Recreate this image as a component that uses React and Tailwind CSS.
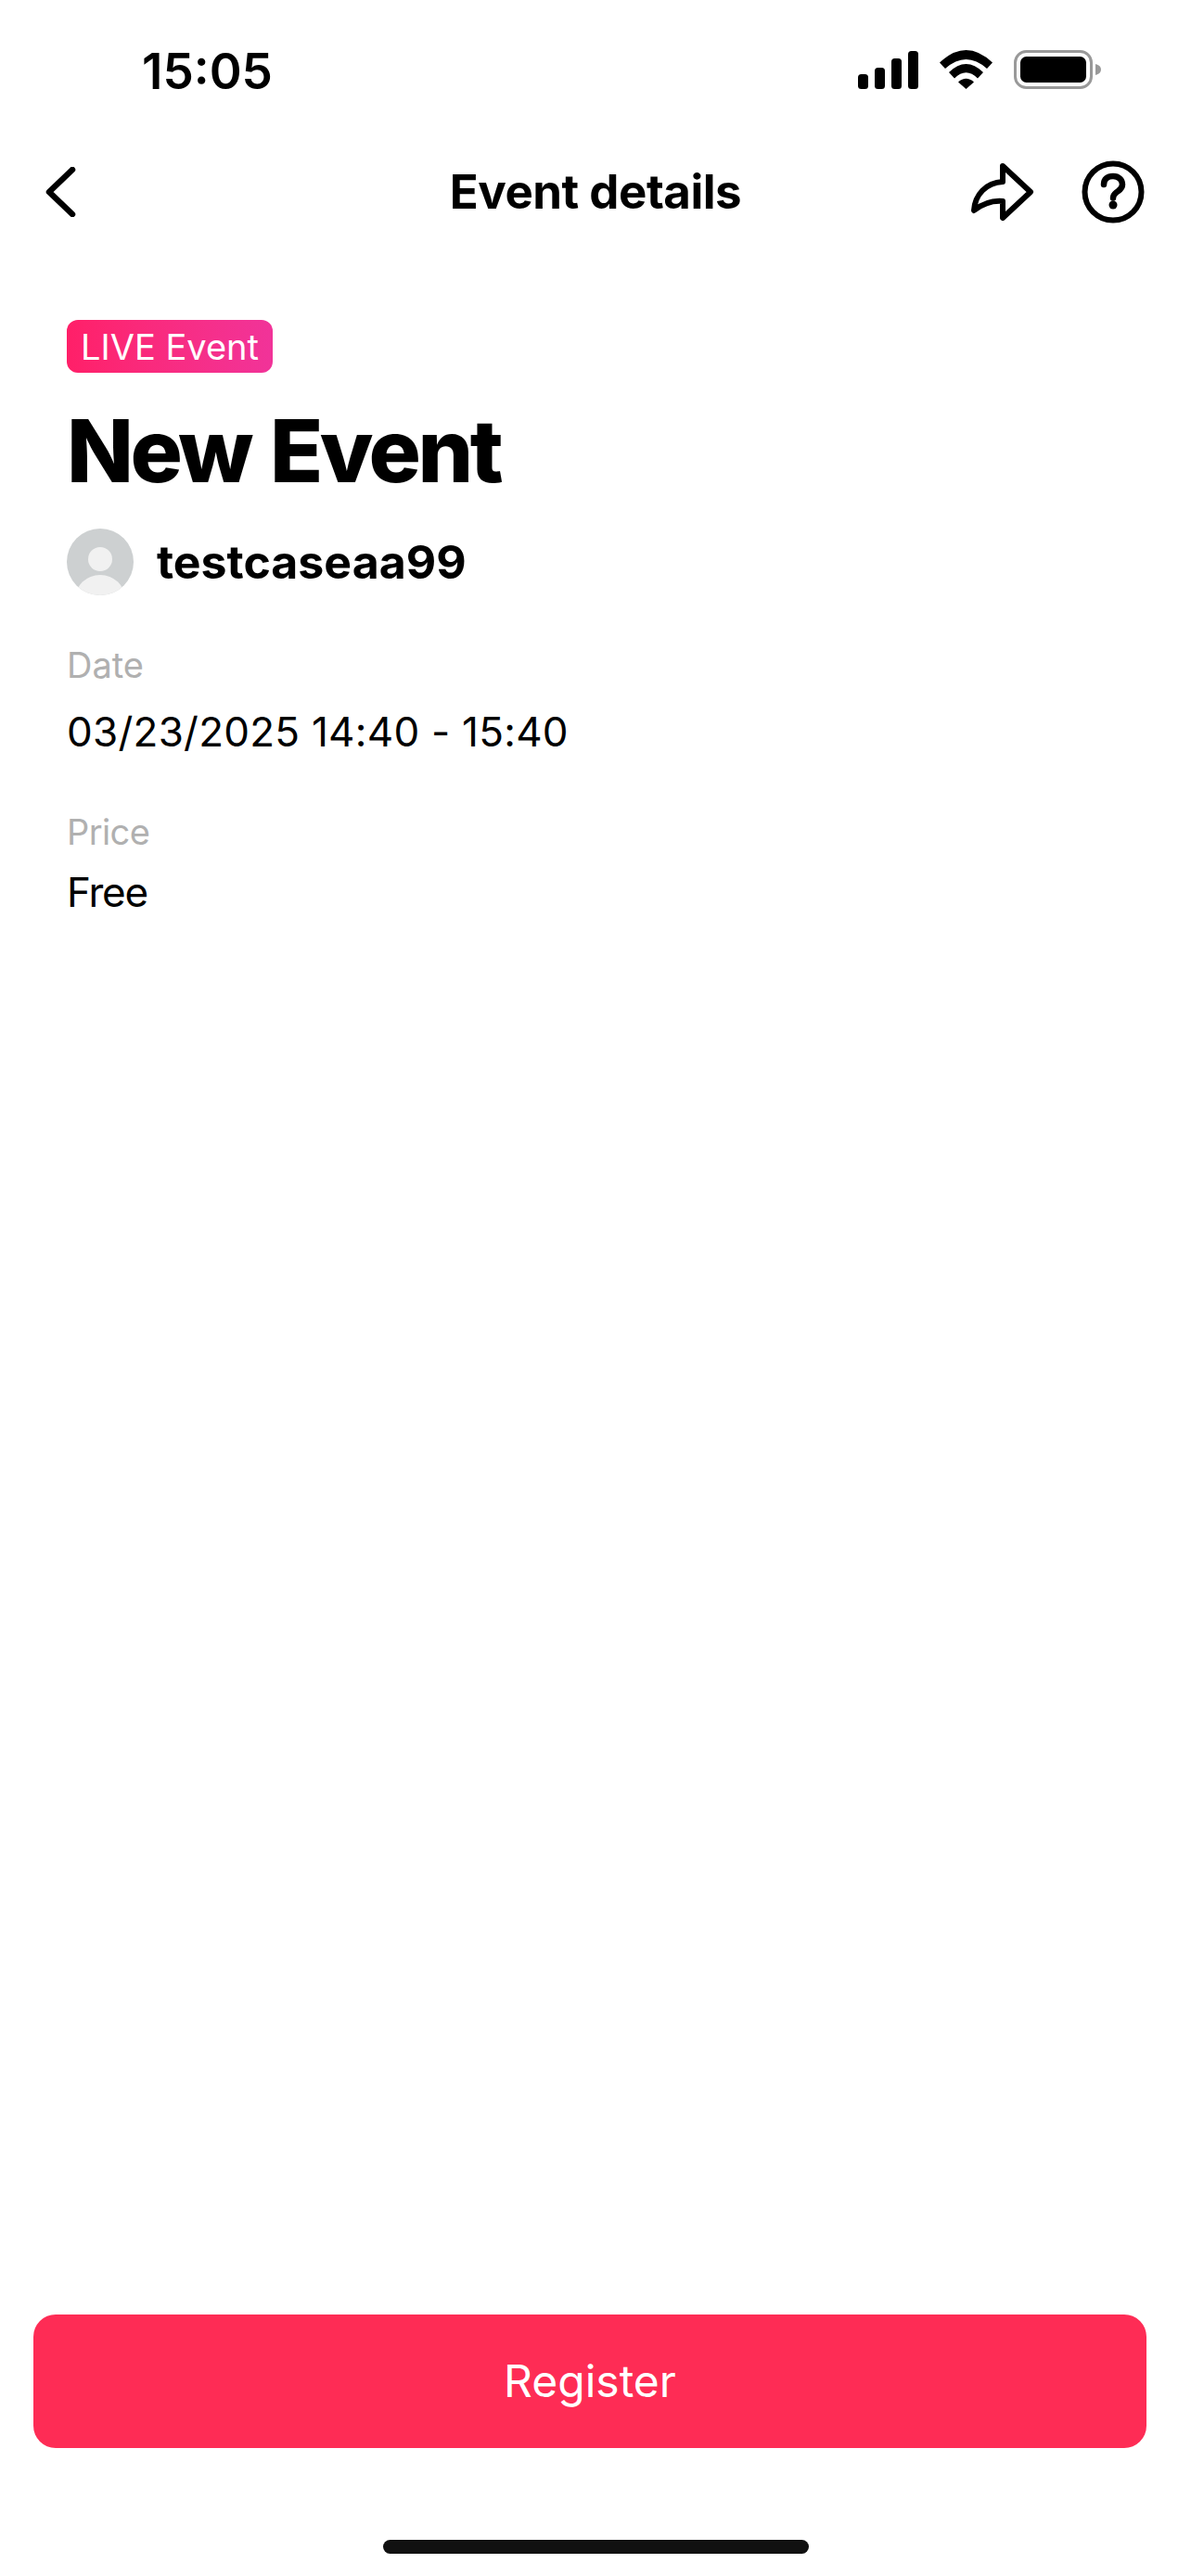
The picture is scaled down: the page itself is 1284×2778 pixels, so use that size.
const inter = "font-['Inter',sans-serif]";

function Signal() {
  return (
    <svg width="65" height="41" viewBox="0 0 65 41" fill="#000" className="block">
      <rect x="0" y="25" width="11" height="16" rx="3.5" />
      <rect x="18" y="18" width="11" height="23" rx="3.5" />
      <rect x="36" y="8" width="11" height="33" rx="3.5" />
      <rect x="54" y="0" width="11" height="41" rx="3.5" />
    </svg>
  );
}

function Wifi() {
  return (
    <svg width="57" height="42" viewBox="0 0 57 42" fill="#000" className="block">
      <path d="M0 13.5Q28.5 -13.5 57 13.5L51 20Q28.5 0 6 20Z" />
      <path d="M10 24Q28.5 6 47 24L41 30.5Q28.5 18 16 30.5Z" />
      <path d="M20 34.5Q28.5 27 37 34.5L28.5 42Z" />
    </svg>
  );
}

function Battery() {
  return (
    <svg width="94" height="42" viewBox="0 0 94 42" className="block">
      <rect x="1.5" y="1.5" width="82" height="39" rx="12" fill="none" stroke="#999" strokeWidth="3" />
      <rect x="7" y="7" width="71" height="28" rx="6.5" fill="#000" />
      <path d="M88 15C92 16 94 18 94 21C94 24 92 26 88 27Z" fill="#999" />
    </svg>
  );
}

function Share() {
  return (
    <svg width="72" height="68" viewBox="0 0 72 68" fill="none" stroke="#000" strokeWidth="6" strokeLinejoin="round" strokeLinecap="round" className="block">
      <path d="M37 6L67 34L37 62L37 44C25 43 15 47 6 54C7 37 19 24 37 23Z" />
    </svg>
  );
}

function Help() {
  return (
    <svg width="68" height="68" viewBox="0 0 68 68" fill="none" className="block">
      <circle cx="34" cy="34" r="30.500" stroke="#000" strokeWidth="6" />
      <path d="M24 26C24 20 28 17 34 17C40 17 44 21 44 26C44 31 40 32.500 37.500 34.500C35 36.500 34 37.500 34 40.500" stroke="#000" strokeWidth="6.500" strokeLinecap="round" />
      <circle cx="34" cy="48" r="4.500" fill="#000" />
    </svg>
  );
}

function Back() {
  return (
    <svg width="34" height="54" viewBox="0 0 34 54" fill="none" stroke="#000" strokeWidth="6.500" strokeLinecap="round" strokeLinejoin="round" className="block">
      <path d="M29 3L4 27L29 51" />
    </svg>
  );
}

function Avatar() {
  return (
    <svg width="72" height="72" viewBox="0 0 72 72" className="block shrink-0">
      <clipPath id="avatar-clip"><circle cx="36" cy="36" r="36" /></clipPath>
      <g clipPath="url(#avatar-clip)">
        <rect width="72" height="72" fill="#cdd0d1" />
        <circle cx="36" cy="33" r="13" fill="#f1f1f1" />
        <ellipse cx="36" cy="76" rx="27" ry="26" fill="#f1f1f1" />
      </g>
    </svg>
  );
}

export default function App() {
  return (
    <div className={`${inter} flex min-h-[2778px] w-[1284px] flex-col bg-white text-black`}>
      <div className="flex h-[150px] items-start justify-between pl-[153px] pr-[97px] pt-[54px]">
        <span className="text-[53px] font-semibold leading-[46px] tracking-[0px]">15:05</span>
        <div className="flex items-center gap-[23px]">
          <Signal />
          <Wifi />
          <Battery />
        </div>
      </div>

      <div className="flex h-[114px] items-center justify-between pl-[49px] pr-[50px]">
        <Back />
        <span className="ml-[157px] text-[51px] font-bold leading-[60px] tracking-[-0.5px]">Event details</span>
        <div className="flex items-center gap-[50px]">
          <Share />
          <Help />
        </div>
      </div>

      <div className="flex flex-col items-start px-[72px] pt-[81px]">
        <div className="flex h-[57px] w-[222px] items-center justify-center rounded-[12px] bg-gradient-to-r from-[#ff1f68] to-[#f13399] text-[38px] leading-none text-white">
          LIVE Event
        </div>
        <h1 className="mt-[34px] text-[94px] font-extrabold leading-[100px] tracking-[-3.5px] [word-spacing:4px]">New Event</h1>
        <div className="mt-[34px] flex items-center gap-[25px]">
          <Avatar />
          <span className="text-[50px] font-bold leading-[60px]">testcaseaa99</span>
        </div>
        <div className="mt-[52px] text-[38px] leading-[46px] text-[#b0b0b0]">Date</div>
        <div className="mt-[21px] text-[44px] leading-[56px] tracking-[0.25px]">03/23/2025 14:40 - 15:40</div>
        <div className="mt-[57px] text-[38px] leading-[46px] tracking-[-0.6px] text-[#b0b0b0]">Price</div>
        <div className="mt-[14px] text-[44px] leading-[56px] tracking-[-1.2px]">Free</div>
      </div>

      <div className="mt-auto pl-[36px] pr-[48px]">
        <button className="flex h-[144px] w-full items-center justify-center rounded-[24px] bg-[#fe2c55] text-[48px] leading-none text-white">
          Register
        </button>
      </div>
      <div className="flex justify-center pb-[24px] pt-[99px]">
        <div className="h-[15px] w-[459px] rounded-full bg-[#111]" />
      </div>
    </div>
  );
}
